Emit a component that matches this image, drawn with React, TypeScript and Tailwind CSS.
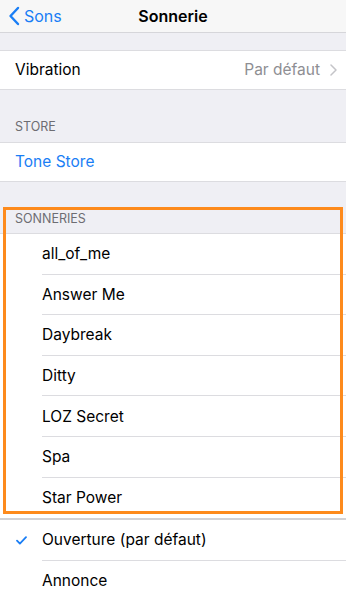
import React from "react"

const font = { fontFamily: "Inter, 'Noto Sans', sans-serif" }

const tones = ["all_of_me", "Answer Me", "Daybreak", "Ditty", "LOZ Secret", "Spa", "Star Power"]

function ToneRow({ name, last, checked }: { name: string; last?: boolean; checked?: boolean }) {
  return (
    <div className="h-[40.6px] flex items-stretch bg-white">
      <div className="w-[42px] flex items-center justify-center pl-[1px]">
        {checked && (
          <svg width="11" height="9" viewBox="0 0 11 9" fill="none">
            <path d="M1 4.6 L3.9 7.6 L10 1.2" stroke="#1a7ef5" strokeWidth="1.8" strokeLinecap="round" strokeLinejoin="round" />
          </svg>
        )}
      </div>
      <div className={`flex-1 flex items-center text-[15.5px] text-black ${last ? "" : "border-b border-[#dcdce0]"}`}>
        {name}
      </div>
    </div>
  )
}

export default function App() {
  return (
    <div className="relative w-[346px] h-[590px] overflow-hidden bg-[#efeff4]" style={font}>
      {/* nav */}
      <div className="relative h-[33px] bg-[#f7f7f7] border-b border-[#d6d6da] flex items-center">
        <div className="flex items-center pl-[8px] text-[#1a7ef5]">
          <svg width="12" height="20" viewBox="0 0 12 20" fill="none">
            <path d="M10 2 L2.5 10 L10 18" stroke="#1a7ef5" strokeWidth="2.4" strokeLinecap="round" strokeLinejoin="round" />
          </svg>
          <span className="ml-[4px] text-[16px] leading-none">Sons</span>
        </div>
        <div className="absolute inset-0 flex items-center justify-center text-[16px] font-semibold text-black">
          Sonnerie
        </div>
      </div>

      <div className="h-[17px]" />

      <div className="h-[40px] bg-white border-y border-[#dcdce0] flex items-center justify-between pl-[15px] pr-[9px]">
        <span className="text-[15.5px] text-black">Vibration</span>
        <div className="flex items-center gap-[10px] text-[#8e8e93]">
          <span className="text-[15.5px]">Par défaut</span>
          <svg width="7" height="12" viewBox="0 0 7 12" fill="none">
            <path d="M1 1 L6 6 L1 11" stroke="#c4c4c8" strokeWidth="1.5" strokeLinecap="round" strokeLinejoin="round" />
          </svg>
        </div>
      </div>

      <div className="h-[52px] flex items-end pl-[15px] pb-[5px] text-[12.5px] text-[#6d6d72]">STORE</div>

      <div className="h-[40px] bg-white border-y border-[#dcdce0] flex items-center pl-[15px] text-[15.5px] text-[#1a7ef5]">
        Tone Store
      </div>

      <div className="h-[52px] flex items-end pl-[15px] pb-[4px] text-[12.5px] text-[#6d6d72] border-b border-[#dcdce0]">SONNERIES</div>

      <div className="bg-white">
        {tones.map((t, i) => (
          <ToneRow key={t} name={t} last={i === tones.length - 1} />
        ))}
        <div className="h-[2px] bg-[#d2d2d6]" />
        <ToneRow name="Ouverture (par défaut)" checked />
        <ToneRow name="Annonce" last />
      </div>

      {/* annotation box */}
      <div className="absolute left-[3px] top-[207px] w-[340px] h-[307px] border-[3px] border-[#fd8a1c]" />
    </div>
  )
}
